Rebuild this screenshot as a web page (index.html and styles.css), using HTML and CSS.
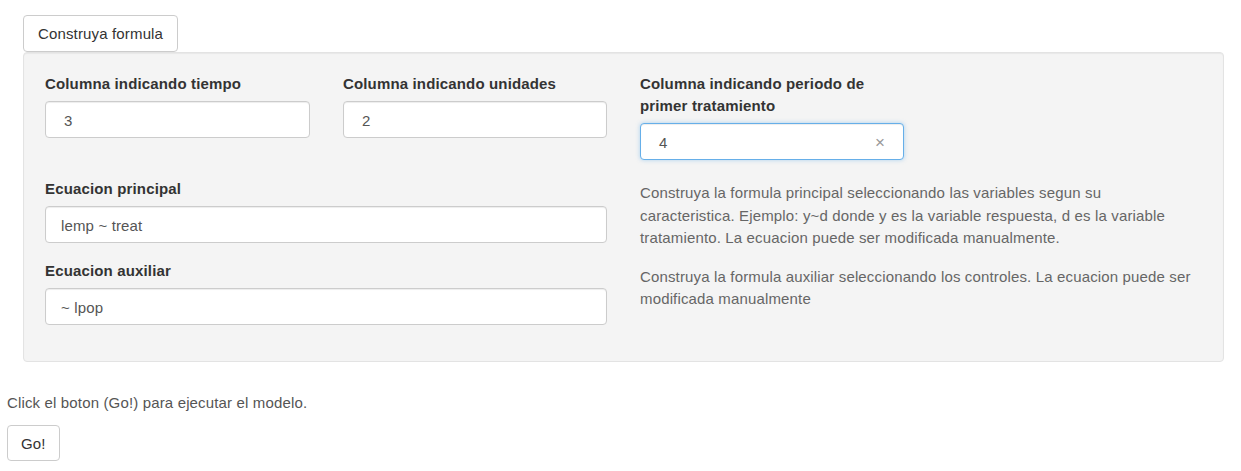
FILE: index.html
```
<!DOCTYPE html>
<html lang="es">
<head>
    <meta charset="UTF-8">
    <title>Construya formula</title>
    <link rel="stylesheet" href="styles.css">
</head>
<body>

    <div class="builder">
        <button class="btn toggle">Construya formula</button>
        <div class="well">
            <div class="row-top">
                <div class="field">
                    <label>Columna indicando tiempo</label>
                    <div class="input num">3</div>
                </div>
                <div class="field">
                    <label>Columna indicando unidades</label>
                    <div class="input num">2</div>
                </div>
                <div class="field">
                    <label>Columna indicando periodo de<br>primer tratamiento</label>
                    <div class="input num focused">4<span class="clear">&times;</span></div>
                </div>
            </div>
            <div class="row-bottom">
                <div>
                    <div class="field">
                        <label>Ecuacion principal</label>
                        <div class="input">lemp ~ treat</div>
                    </div>
                    <div class="field">
                        <label>Ecuacion auxiliar</label>
                        <div class="input">~ lpop</div>
                    </div>
                </div>
                <div class="help">
                    <p>Construya la formula principal seleccionando las variables segun su caracteristica. Ejemplo: y~d donde y es la variable respuesta, d es la variable tratamiento. La ecuacion puede ser modificada manualmente.</p>
                    <p>Construya la formula auxiliar seleccionando los controles. La ecuacion puede ser modificada manualmente</p>
                </div>
            </div>
        </div>
    </div>

    <div class="run">
        <p>Click el boton (Go!) para ejecutar el modelo.</p>
        <button class="btn go">Go!</button>
    </div>

</body>
</html>
```

FILE: styles.css
```
body {
    margin: 0;
    font-family: "Liberation Sans", Arial, sans-serif;
    font-size: 15px;
    letter-spacing: 0.15px;
    color: #333;
    background: #fff;
}
.btn {
    font-family: inherit;
    font-size: 15px;
    letter-spacing: inherit;
    color: #333;
    background: #fff;
    border: 1px solid #ccc;
    border-radius: 4px;
    height: 37px;
    padding: 0 14px;
    cursor: pointer;
}
.builder {
    padding: 15px 0 0 23px;
}
.toggle {
    display: block;
    height: 37px;
}
.well {
    width: 1199px;
    height: 308px;
    box-sizing: content-box;
    background: #f4f4f4;
    border: 1px solid #e3e3e3;
    border-radius: 4px;
    box-shadow: inset 0 1px 1px rgba(0, 0, 0, .05);
}
.row-top {
    display: grid;
    grid-template-columns: 265px 264px 264px;
    column-gap: 33px;
    padding: 20px 0 0 21px;
}
.row-bottom {
    display: grid;
    grid-template-columns: 562px 562px;
    column-gap: 33px;
    padding: 1px 0 0 21px;
}
label {
    display: block;
    font-weight: bold;
    line-height: 22px;
    margin-bottom: 6px;
}
.field {
    margin-bottom: 17px;
}
.input {
    position: relative;
    height: 37px;
    line-height: 37px;
    box-sizing: border-box;
    padding: 0 15px;
    background: #fff;
    border: 1px solid #ccc;
    border-radius: 4px;
    color: #555;
    box-shadow: inset 0 1px 1px rgba(0, 0, 0, .075);
}
.input.num {
    padding-left: 18px;
}
.input.focused {
    border-color: #66afe9;
    box-shadow: inset 0 1px 1px rgba(0, 0, 0, .075), 0 0 4px rgba(102, 175, 233, .5);
}
.clear {
    position: absolute;
    right: 18px;
    top: 0;
    color: #999;
    font-size: 17px;
    font-weight: 300;
}
.help {
    max-width: 556px;
    color: #666;
    line-height: 22.5px;
    padding-top: 4px;
}
.help p {
    margin: 0 0 16px;
}
.run {
    padding: 31px 0 0 7px;
    color: #555;
}
.run p {
    margin: 0 0 12px;
    line-height: 20px;
}
.go {
    height: 36px;
    padding: 0 13px;
}
```
